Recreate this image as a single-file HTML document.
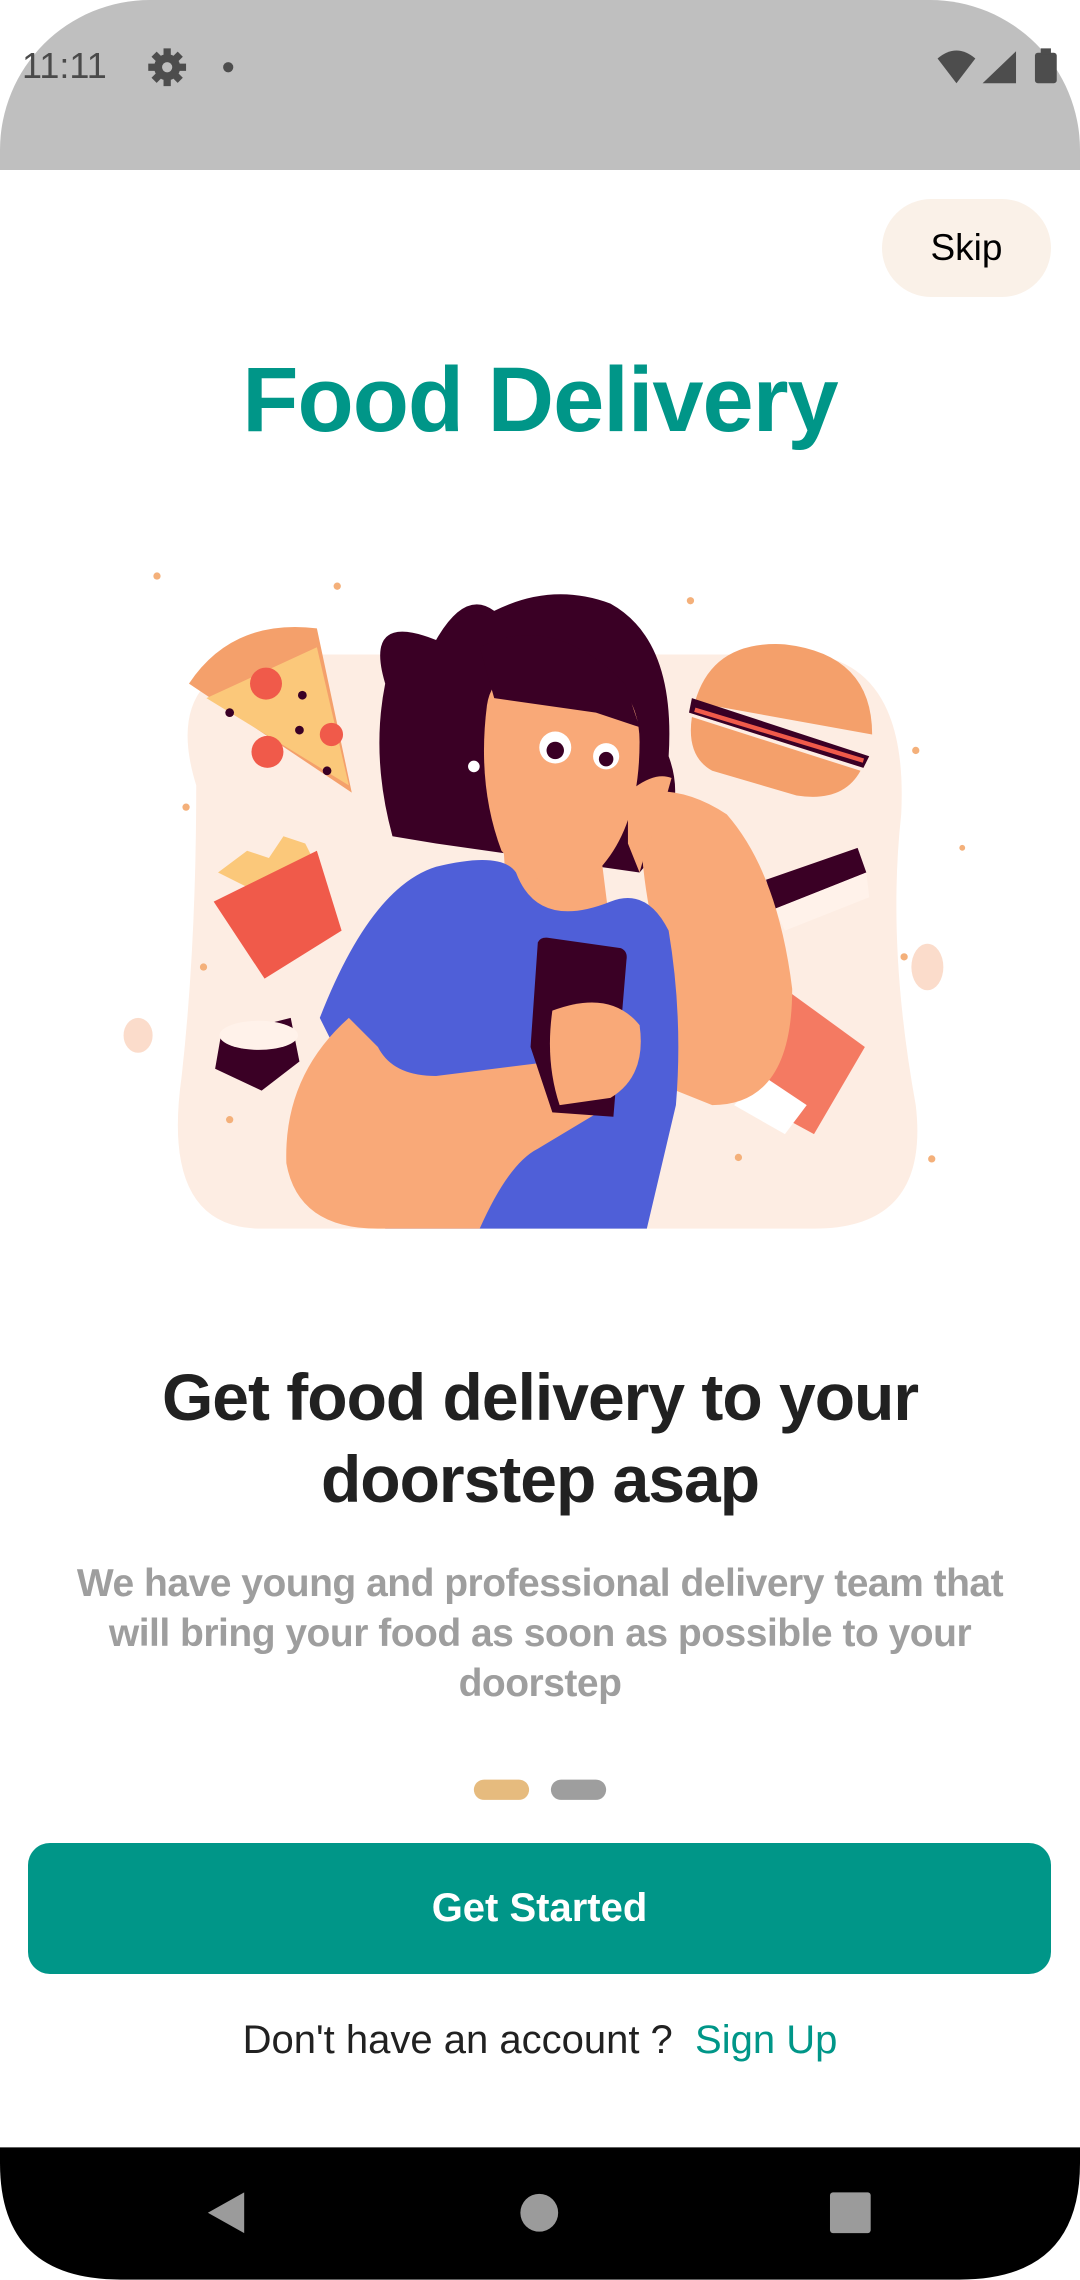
<!DOCTYPE html>
<html><head><meta charset="utf-8"><style>
*{margin:0;padding:0;box-sizing:border-box}
body{width:1080px;height:2280px;background:#fff;position:relative;overflow:hidden;font-family:"Liberation Sans",Roboto,sans-serif}
.abs{position:absolute}
.c{left:0;width:1080px;text-align:center}
</style></head><body>
<div class="abs" style="left:0;top:0;width:1080px;height:170px;background:#bfbfbf;border-radius:150px 150px 0 0"></div>
<div class="abs" style="left:22px;top:45px;font-size:36px;color:#4a4a4a">11:11</div>
<svg class="abs" style="left:0;top:0" width="1080" height="2280" viewBox="0 0 743 1568">
 <g fill="#4d4d4d">
  <circle cx="115" cy="46" r="9"/>
  <g stroke="#4d4d4d" stroke-width="5"><line x1="115" y1="33" x2="115" y2="59"/><line x1="102" y1="46" x2="128" y2="46"/><line x1="106" y1="37" x2="124" y2="55"/><line x1="124" y1="37" x2="106" y2="55"/></g>
  <circle cx="115" cy="46" r="3.5" fill="#bfbfbf"/>
  <circle cx="157" cy="46" r="3.5"/>
  <path d="M645 40 Q658 29 671 40 L658 57 Z"/>
  <path d="M699 35 L699 57 L676 57 Z"/>
  <rect x="712" y="36" width="15" height="21" rx="2"/><rect x="716" y="33" width="7" height="4"/>
 </g>
 <path d="M135 540 Q110 460 190 450 L300 450 Q360 430 420 450 L560 450 Q625 460 620 560 Q610 650 630 760 Q640 845 560 845 L180 845 Q110 845 125 740 Q135 650 135 540Z" fill="#fdede3"/>
 <ellipse cx="95" cy="712" rx="10" ry="12" fill="#fbdccb"/>
 <ellipse cx="638" cy="665" rx="11" ry="16" fill="#fbdccb"/>
 <g fill="#f4b07a"><circle cx="108" cy="396" r="2.5"/><circle cx="232" cy="403" r="2.5"/><circle cx="475" cy="413" r="2.5"/><circle cx="630" cy="516" r="2.5"/><circle cx="128" cy="555" r="2.5"/><circle cx="662" cy="583" r="2"/><circle cx="140" cy="665" r="2.5"/><circle cx="622" cy="658" r="2.5"/><circle cx="508" cy="796" r="2.5"/><circle cx="641" cy="797" r="2.5"/><circle cx="425" cy="437" r="2"/><circle cx="158" cy="770" r="2.5"/></g>
 <path d="M130 470 Q160 425 218 432 L242 545 Z" fill="#f4a06b"/>
 <path d="M142 480 L218 445 L240 540 Z" fill="#fbc87a"/>
 <g fill="#f05a4a"><circle cx="183" cy="470" r="11"/><circle cx="184" cy="517" r="11"/><circle cx="228" cy="505" r="8"/></g>
 <g fill="#3a0025"><circle cx="208" cy="478" r="3"/><circle cx="158" cy="490" r="3"/><circle cx="206" cy="502" r="3"/><circle cx="225" cy="530" r="3"/></g>
 <path d="M478 483 Q490 440 540 443 Q600 450 600 505 Z" fill="#f4a06b"/>
 <path d="M476 480 L598 520 L594 528 L474 490 Z" fill="#3a0025"/>
 <path d="M476 493 L592 530 Q580 552 548 547 L490 530 Q472 520 476 493Z" fill="#f4a06b"/>
 <path d="M478 488 L594 523" stroke="#f05a4a" stroke-width="3"/>
 <path d="M150 600 L170 585 L185 590 L195 575 L210 580 L220 600 L190 620 Z" fill="#fbc87a"/>
 <path d="M147 620 L218 585 L235 640 L182 673 Z" fill="#f05a4a"/>
 <path d="M152 712 L200 700 L206 730 L180 750 L148 735Z" fill="#3a0025"/>
 <ellipse cx="178" cy="712" rx="27" ry="10" fill="#fff2ea"/>
 <path d="M527 605 L590 583 L596 600 L533 625Z" fill="#3a0025"/>
 <path d="M533 625 L596 600 L598 617 L540 640Z" fill="#fff2ea"/>
 <path d="M540 680 L595 720 L560 780 L505 750Z" fill="#f47a62"/>
 <path d="M525 740 L555 760 L540 780 L505 760Z" fill="#fff"/>
 <path d="M300 440 Q250 420 265 470 Q255 520 270 575 L300 580 L440 600 Q475 560 460 520 Q465 440 420 415 Q380 400 340 420 Q320 405 300 440Z" fill="#3a0025"/>
 <path d="M440 545 Q470 540 500 560 Q535 600 545 680 Q545 760 490 760 L440 740 L450 640 Q440 600 440 545Z" fill="#f9a978"/>
 <path d="M345 560 L410 560 L420 640 Q385 670 350 640Z" fill="#f9a978"/>
 <path d="M335 485 Q340 450 400 455 Q440 470 440 510 Q440 570 410 600 Q375 620 345 585 Q328 540 335 485Z" fill="#f9a978"/>
 <path d="M330 445 Q380 420 430 470 L440 500 L410 490 L340 480Z" fill="#3a0025"/>
 <circle cx="382" cy="514" r="11" fill="#fff"/><circle cx="382" cy="516" r="6" fill="#3a0025"/>
 <circle cx="417" cy="520" r="9" fill="#fff"/><circle cx="417" cy="522" r="5" fill="#3a0025"/>
 <circle cx="326" cy="527" r="4" fill="#fff"/>
 <path d="M300 596 Q345 585 355 600 Q370 640 420 620 Q445 610 460 640 Q470 700 465 760 L445 845 L265 845 L260 780 L220 700 Q255 610 300 596Z" fill="#4f5fd8"/>
 <path d="M240 700 Q195 740 197 800 Q205 845 260 845 L330 845 Q350 800 370 790 L420 760 Q440 720 420 700 L380 730 L300 740 Q270 740 260 720Z" fill="#f9a978"/>
 <path d="M370 648 Q372 644 378 645 L427 652 Q432 654 431 660 L422 768 L380 765 L365 720Z" fill="#3a0025"/>
 <path d="M380 695 Q420 680 440 705 Q445 740 420 755 L385 760 Q375 730 380 695Z" fill="#f9a978"/>
 <path d="M432 545 Q450 530 462 535 L455 560 Q445 580 440 600 L432 580Z" fill="#f9a978"/>
 <rect x="326" y="1224" width="38" height="14" rx="7" fill="#e6bb7e"/>
 <rect x="379" y="1224" width="38" height="14" rx="7" fill="#9e9e9e"/>
 <path d="M0 1477 L743 1477 L743 1488 Q743 1568 660 1568 L83 1568 Q0 1568 0 1488Z" fill="#000"/>
 <path d="M168 1508 L168 1536 L143 1522 Z" fill="#9b9b9b"/>
 <circle cx="371" cy="1522" r="13" fill="#9b9b9b"/>
 <rect x="571" y="1508" width="28" height="28" rx="2" fill="#9b9b9b"/>
</svg>
<div class="abs" style="left:882px;top:199px;width:169px;height:98px;border-radius:49px;background:#faf1e8;font-size:37px;line-height:98px;text-align:center;color:#000">Skip</div>
<div class="abs" style="left:0;width:1080px;text-align:center;top:348px;font-size:92px;font-weight:bold;color:#009688;letter-spacing:-1px">Food Delivery</div>
<div class="abs c" style="top:1356px;font-size:66px;line-height:82px;font-weight:bold;color:#212121;letter-spacing:-1px">Get food delivery to your<br>doorstep asap</div>
<div class="abs c" style="top:1559px;font-size:39px;line-height:50px;font-weight:bold;color:#9e9e9e;letter-spacing:-0.5px">We have young and professional delivery team that<br>will bring your food as soon as possible to your<br>doorstep</div>
<div class="abs" style="left:28px;top:1843px;width:1023px;height:131px;border-radius:22px;background:#009688;color:#fff;font-size:40px;font-weight:bold;line-height:131px;text-align:center">Get Started</div>
<div class="abs c" style="top:2018px;font-size:40px;color:#212121">Don't have an account ?&nbsp; <span style="color:#009688">Sign Up</span></div>
</body></html>
